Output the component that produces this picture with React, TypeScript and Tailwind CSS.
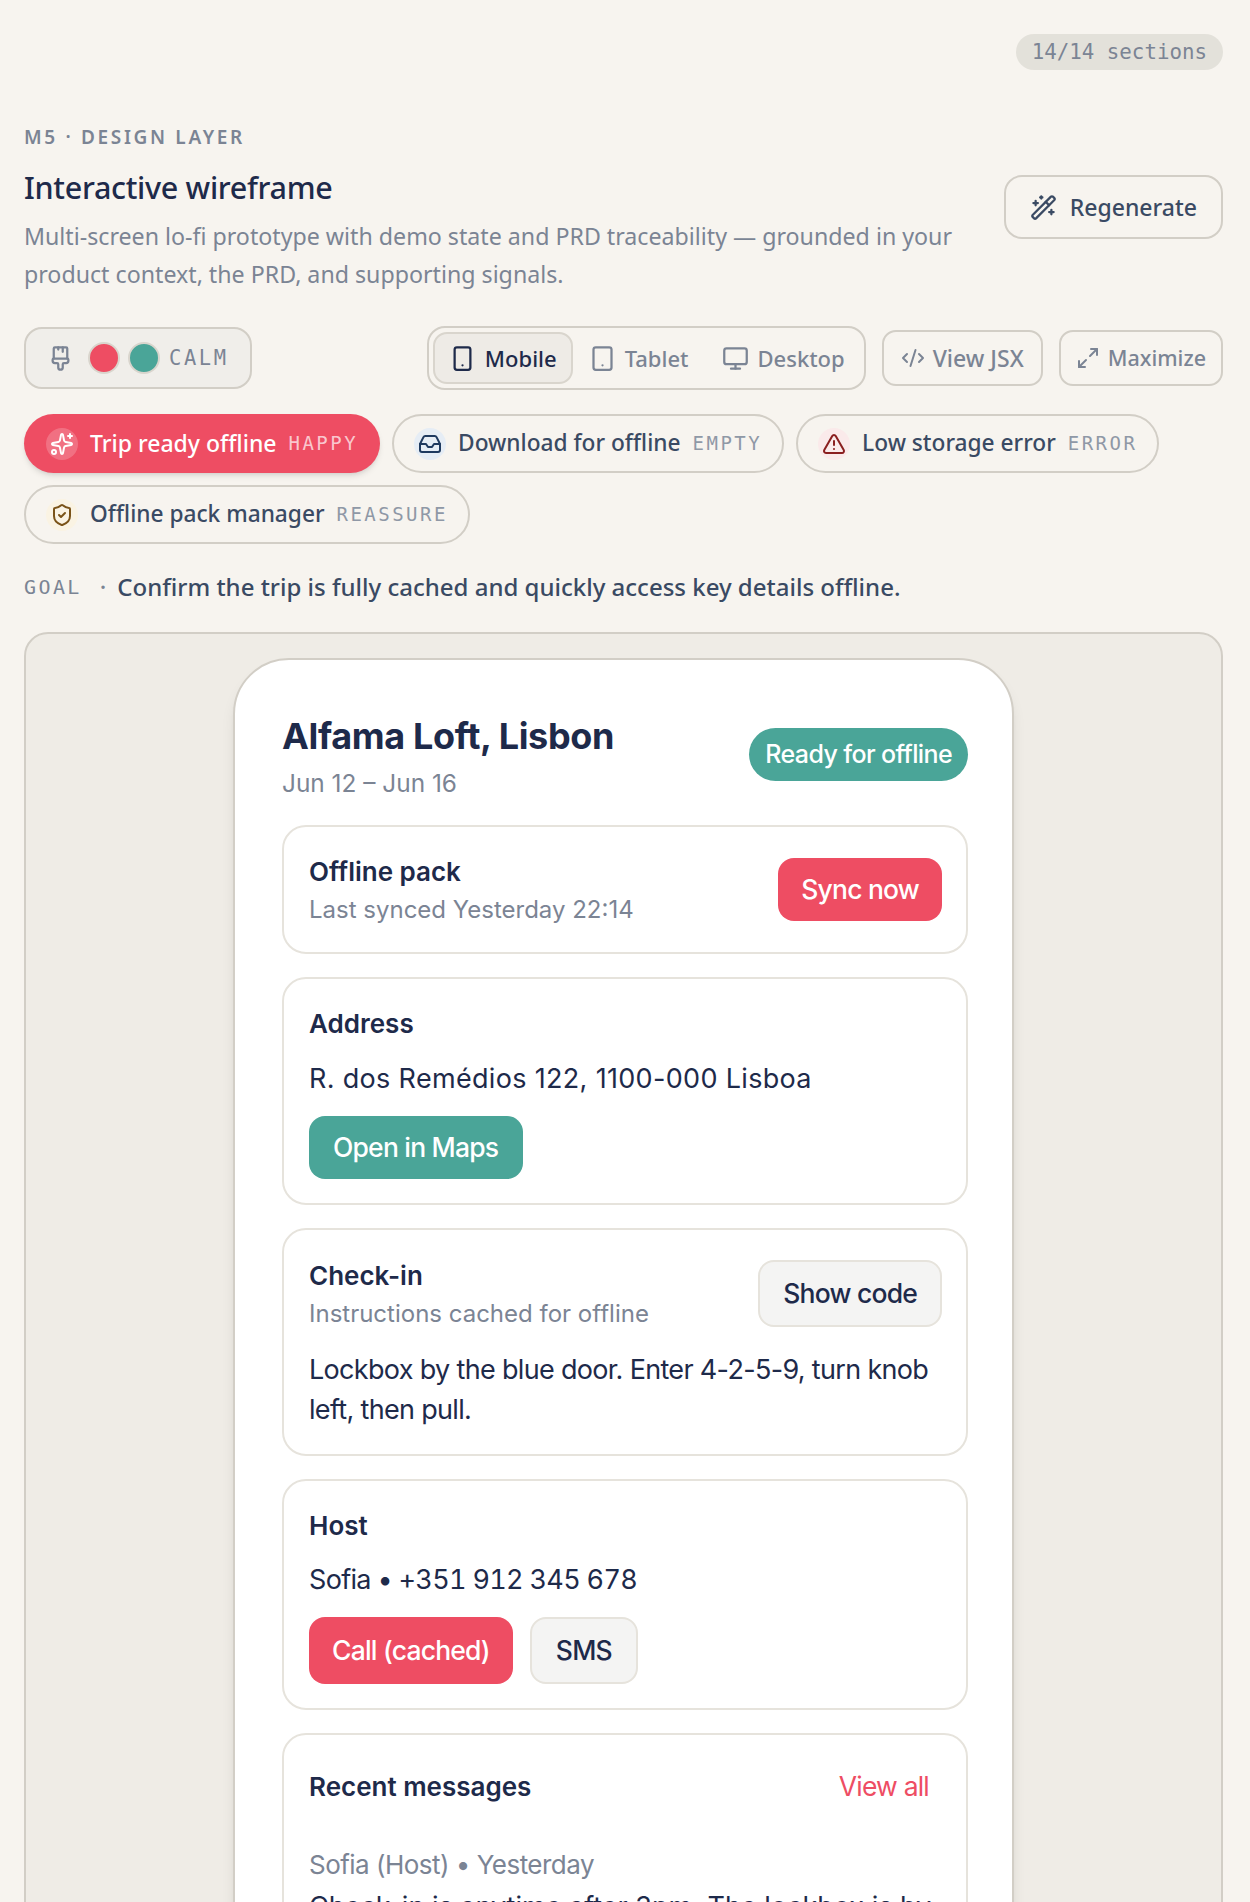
import {
  PaintbrushVertical,
  WandSparkles,
  Smartphone,
  Tablet,
  Monitor,
  CodeXml,
  Maximize2,
  Sparkles,
  Inbox,
  TriangleAlert,
  ShieldCheck,
} from "lucide-react";

const plex = "font-['Noto_Sans','Liberation_Sans',sans-serif]";
const mono = "font-['DejaVu_Sans_Mono','Liberation_Mono',monospace]";
const body = "text-[27px] leading-[40px] text-[#1e2a4a]";
const action = "rounded-[16px] text-[26.5px] font-medium tracking-[-0.03em]";

const screens = [
  { label: "Download for offline", tag: "EMPTY", Icon: Inbox, box: "bg-[#e6edf5] text-[#1f3a5f]" },
  { label: "Low storage error", tag: "ERROR", Icon: TriangleAlert, box: "bg-[#faeaea] text-[#8a1f1f]" },
  { label: "Offline pack manager", tag: "REASSURE", Icon: ShieldCheck, box: "bg-[#faf3e3] text-[#7a5318]" },
];

function Card({ children }: { children: React.ReactNode }) {
  return <div className="rounded-[24px] border-2 border-[#e6e3dc] bg-white pb-[24px] pl-[25px] pr-[24px] pt-[27px]">{children}</div>;
}

export default function App() {
  return (
    <div className={`h-[1902px] overflow-hidden bg-[#f7f4ef] pl-6 pr-[27px] pt-[34px] ${plex}`}>
      <div className="flex justify-end">
        <span className={`flex h-9 items-center rounded-full bg-[#e3e1da] px-4 text-[20.8px] leading-none text-[#7b8494] ${mono}`}>
          14/14 sections
        </span>
      </div>

      <div className="mt-[54px] text-[19px] font-semibold leading-[27px] tracking-[0.14em] text-[#7b8494]">M5 · DESIGN LAYER</div>

      <div className="mt-[16px] flex items-start justify-between">
        <div className="w-[960px]">
          <h1 className="text-[30.5px] font-medium leading-[40px] tracking-[-0.01em] text-[#1e2a4a]">Interactive wireframe</h1>
          <p className="mt-[10px] text-[23.2px] leading-[38px] text-[#7b8494]">
            Multi-screen lo-fi prototype with demo state and PRD traceability — grounded in your product context, the PRD, and supporting signals.
          </p>
        </div>
        <button className="mt-[8px] flex h-[64px] items-center gap-[13px] rounded-[18px] border-2 border-[#d2cec6] px-[24px] text-[23px] font-medium text-[#3a4a63]">
          <WandSparkles size={27} strokeWidth={2} />
          Regenerate
        </button>
      </div>

      <div className="mt-[33px] flex items-center">
        <div className="flex h-[62px] items-center gap-[8px] rounded-[18px] border-2 border-[#d2cec6] bg-[#f0eeea] pl-[21px] pr-[21px]">
          <PaintbrushVertical size={27} strokeWidth={2} className="text-[#7b8494]" />
          <span className="ml-[6px] h-[32px] w-[32px] rounded-full border-2 border-[#d9d5cd] bg-[#ee4d63]" />
          <span className="h-[32px] w-[32px] rounded-full border-2 border-[#d9d5cd] bg-[#4aa598]" />
          <span className={`ml-[1px] text-[20.4px] tracking-[0.13em] text-[#7b8494] ${mono}`}>CALM</span>
        </div>

        <div className="ml-auto flex h-[64px] items-center rounded-[18px] border-2 border-[#d2cec6] px-[4px]">
          <div className="flex h-[52px] items-center gap-[9px] rounded-[14px] border-2 border-[#d9d5cd] bg-[#eeebe6] px-[14px] text-[22px] font-medium text-[#1e2a4a]">
            <Smartphone size={27} strokeWidth={2} />
            Mobile
          </div>
          <div className="flex h-[52px] items-center gap-[9px] pl-[16px] pr-[20px] text-[22px] font-medium text-[#7b8494]">
            <Tablet size={27} strokeWidth={2} />
            Tablet
          </div>
          <div className="flex h-[52px] items-center gap-[8px] pl-[14px] pr-[15px] text-[22px] font-medium text-[#7b8494]">
            <Monitor size={27} strokeWidth={2} />
            Desktop
          </div>
        </div>

        <button className="ml-[16px] flex h-[56px] items-center gap-[8px] rounded-[14px] border-2 border-[#d2cec6] px-[17px] text-[23px] font-medium text-[#7b8494]">
          <CodeXml size={24} strokeWidth={2} />
          View JSX
        </button>
        <button className="ml-[16px] flex h-[56px] items-center gap-[8px] rounded-[14px] border-2 border-[#d2cec6] px-[15px] text-[21.5px] font-medium text-[#7b8494]">
          <Maximize2 size={24} strokeWidth={2} />
          Maximize
        </button>
      </div>

      <div className="mt-[24px] flex flex-wrap gap-x-3 gap-y-3">
        <div className="flex h-[59px] items-center gap-[12px] rounded-full bg-[#ee4d63] pl-[22px] pr-[22px] text-white shadow-md">
          <span className="flex h-8 w-8 items-center justify-center rounded-full bg-white/20">
            <Sparkles size={24} strokeWidth={2} />
          </span>
          <span className="text-[23px] font-medium">Trip ready offline</span>
          <span className={`text-[19px] tracking-[0.13em] text-white/70 ${mono}`}>HAPPY</span>
        </div>
        {screens.map(({ label, tag, Icon, box }) => (
          <div key={tag} className="flex h-[59px] items-center gap-[12px] rounded-full border-2 border-[#d2cec6] pl-[20px] pr-[20px]">
            <span className={`flex h-8 w-8 items-center justify-center rounded-full ${box}`}>
              <Icon size={24} strokeWidth={2} />
            </span>
            <span className="text-[22.7px] font-medium text-[#3a4a63]">{label}</span>
            <span className={`text-[19px] tracking-[0.13em] text-[#8f98a6] ${mono}`}>{tag}</span>
          </div>
        ))}
      </div>

      <div className="mt-[25px] flex items-center text-[24px] font-medium text-[#3a4a63]">
        <span className={`text-[20px] font-normal tracking-[0.12em] text-[#7b8494] ${mono}`}>GOAL</span>
        <span className="ml-[18px] mr-[11px] text-[#7b8494]">·</span>
        Confirm the trip is fully cached and quickly access key details offline.
      </div>

      <div className="mt-[27px] h-[1400px] rounded-t-[24px] border-2 border-[#d2cec6] bg-[#efece6] pt-[24px]">
        <div className="mx-auto w-[781px] rounded-[56px] border-2 border-[#d2cec6] bg-white pl-[47px] pr-[44px] pt-[54px] font-['Inter',sans-serif] shadow-lg">
          <div className="flex items-start justify-between">
            <div>
              <h2 className="text-[36px] font-bold leading-[44px] tracking-[-0.01em] text-[#1e2a4a]">Alfama Loft, Lisbon</h2>
              <div className="mt-[9px] text-[24.4px] leading-[32px] text-[#7b8494]">Jun 12 – Jun 16</div>
            </div>
            <span className="mt-[14px] flex h-[53px] items-center rounded-full bg-[#4aa598] px-4 text-[25px] font-medium tracking-[-0.025em] text-white">Ready for offline</span>
          </div>

          <div className="mt-[26px] flex flex-col gap-[23px]">
            <Card>
              <div className="flex items-start justify-between">
                <div>
                  <div className="text-[26px] font-semibold leading-[36px] text-[#1e2a4a]">Offline pack</div>
                  <div className="mt-[2px] text-[24px] leading-[36px] text-[#7b8494]">Last synced Yesterday 22:14</div>
                </div>
                <button className={`mt-[4px] h-[63px] bg-[#ee4d63] px-[23px] text-white ${action}`}>Sync now</button>
              </div>
            </Card>

            <Card>
              <div className="text-[26px] font-semibold leading-[36px] text-[#1e2a4a]">Address</div>
              <div className={`mt-[17px] tracking-[0.012em] ${body}`}>R. dos Remédios 122, 1100-000 Lisboa</div>
              <button className={`mt-[17px] h-[63px] bg-[#4aa598] pl-[24px] pr-[25px] text-white ${action}`}>Open in Maps</button>
            </Card>

            <Card>
              <div className="mt-[1px] flex items-start justify-between">
                <div>
                  <div className="text-[26px] font-semibold leading-[36px] text-[#1e2a4a]">Check-in</div>
                  <div className="mt-[2px] text-[24px] leading-[36px] text-[#7b8494]">Instructions cached for offline</div>
                </div>
                <button className={`mt-[2px] h-[67px] border-2 border-[#e6e3dc] bg-[#f4f4f3] px-[23px] text-[#1e2a4a] ${action}`}>Show code</button>
              </div>
              <div className={`mt-[18px] tracking-[-0.025em] ${body}`}>Lockbox by the blue door. Enter 4-2-5-9, turn knob left, then pull.</div>
            </Card>

            <Card>
              <div className="text-[26px] font-semibold leading-[36px] text-[#1e2a4a]">Host</div>
              <div className={`mt-[16px] tracking-[-0.025em] tabular-nums ${body}`}>Sofia • +351 912 345 678</div>
              <div className="mt-[17px] flex gap-[17px]">
                <button className={`h-[67px] bg-[#ee4d63] px-[23px] text-white ${action}`}>Call (cached)</button>
                <button className={`h-[67px] border-2 border-[#e6e3dc] bg-[#f4f4f3] px-[24px] text-[#1e2a4a] ${action}`}>SMS</button>
              </div>
            </Card>

            <Card>
              <div className="mt-[5px] flex items-center justify-between">
                <div className="text-[26px] font-semibold leading-[36px] text-[#1e2a4a]">Recent messages</div>
                <span className="mr-[13px] text-[26.5px] tracking-[-0.03em] text-[#ee4d63]">View all</span>
              </div>
              <div className="mt-[38px] text-[26px] leading-[40px] tracking-[-0.02em] text-[#7b8494]">Sofia (Host) • Yesterday</div>
              <div className={`mt-[2px] ${body}`}>Check-in is anytime after 3pm. The lockbox is by the blue door.</div>
            </Card>
          </div>
        </div>
      </div>
    </div>
  );
}
